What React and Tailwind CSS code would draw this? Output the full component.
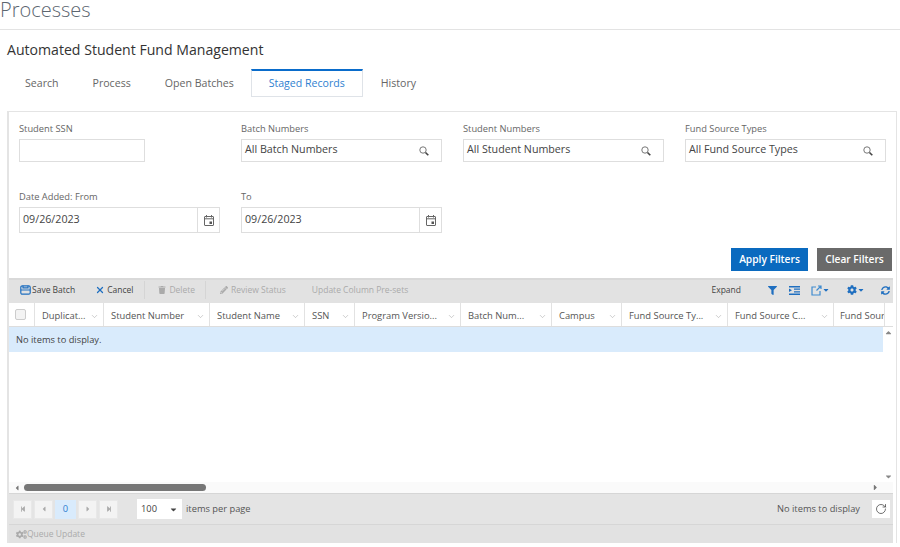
import React from "react";
import { RotateCw, ChevronDown, X } from "lucide-react";
import { FaFilter, FaCog, FaSyncAlt, FaCogs, FaTrash, FaPencilAlt, FaCaretDown, FaCaretUp, FaCaretLeft, FaCaretRight, FaStepBackward, FaStepForward } from "react-icons/fa";

const tabs = ["Search", "Process", "Open Batches", "Staged Records", "History"];

const columns = [
  ["Duplicat...", "w-[69px]"],
  ["Student Number", "w-[106px]"],
  ["Student Name", "w-[95px]"],
  ["SSN", "w-[50px]"],
  ["Program Versio...", "w-[106px]"],
  ["Batch Num...", "w-[91px]"],
  ["Campus", "w-[70px]"],
  ["Fund Source Ty...", "w-[106px]"],
  ["Fund Source C...", "w-[106px]"],
];

function FieldLabel({ children }) {
  return <div className="text-[9.3px] leading-[14px] pt-[1px] h-[14px] text-[#666] mb-[4px]">{children}</div>;
}

function LookupIcon() {
  return (
    <svg width="10" height="10" viewBox="0 0 10 10" fill="none" stroke="#777">
      <circle cx="4" cy="4" r="3.2" strokeWidth="1" />
      <path d="M6.5 6.5L9.3 9.3" stroke="#444" strokeWidth="1.6" />
    </svg>
  );
}

function CalendarIcon() {
  return (
    <svg width="10" height="11" viewBox="0 0 10 11" fill="none" stroke="#666">
      <rect x="0.5" y="1.5" width="9" height="9" rx="0.5" />
      <path d="M0.5 3.8h9M2.5 0v2.5M7.5 0v2.5" />
      <rect x="5.5" y="6.5" width="2.5" height="2.5" fill="#555" stroke="none" />
    </svg>
  );
}

function LookupField({ label, value }) {
  return (
    <div className="w-[201px]">
      <FieldLabel>{label}</FieldLabel>
      <div className="h-[23px] border border-[#dedede] flex items-center justify-between pl-[3px] pr-[12px] text-[10.7px] text-[#444]">
        <span className="pb-[2px]">{value}</span>
        <LookupIcon />
      </div>
    </div>
  );
}

function DateField({ label }) {
  return (
    <div className="w-[201px]">
      <FieldLabel>{label}</FieldLabel>
      <div className="h-[26px] border border-[#dedede] flex items-center text-[10.7px] text-[#444]">
        <span className="flex-1 pl-[3px] pb-[2px]">09/26/2023</span>
        <span className="w-[22px] h-full border-l border-[#dedede] flex items-center justify-center">
          <CalendarIcon />
        </span>
      </div>
    </div>
  );
}

function SaveIcon() {
  return (
    <svg width="11" height="10" viewBox="0 0 11 10" fill="none" stroke="#1f6fc0" strokeWidth="1.2">
      <rect x="0.8" y="0.8" width="9.4" height="8.4" rx="1.5" />
      <path d="M0.8 5h9.4M3 0.8v2h5v-2" />
    </svg>
  );
}

function RowsIcon() {
  return (
    <svg width="11" height="9" viewBox="0 0 11 9" fill="#1f6fc0">
      <path d="M0 0h11v1.5H0zM5 2.6h6v1.2H5zM5 5.2h6v1.2H5zM0 7.5h11V9H0zM0 2.6l3 1.7-3 1.8z" />
    </svg>
  );
}

function ExportIcon() {
  return (
    <svg width="11" height="11" viewBox="0 0 11 11" fill="none" stroke="#3f8bd0" strokeWidth="1.2">
      <path d="M5 2H1v8h8V6M5.5 5.5L10 1M7 1h3v3" />
    </svg>
  );
}

function PagerButton({ children }) {
  return (
    <span className="w-[19px] h-[19px] bg-[#f3f3f3] border border-[#e8e8e8] flex items-center justify-center text-[#aaa] text-[6px]">
      {children}
    </span>
  );
}

export default function App() {
  return (
    <div className="w-[900px] h-[547px] overflow-hidden bg-white font-['Open_Sans',sans-serif]">
      <div className="h-[30px] border-b border-[#e3e3e3]">
        <h1 className="text-[20px] leading-[20px] font-light text-[#5c6670]">Processes</h1>
      </div>

      <div className="pl-[7px] pr-[3px]">
        <h2 className="mt-[10px] text-[14.1px] leading-[20px] text-[#333]">Automated Student Fund Management</h2>

        <div className="mt-[9px] h-[28px] flex text-[10.6px] text-[#666]">
          {tabs.map((t) =>
            t === "Staged Records" ? (
              <div key={t} className="w-[112px] border-t-2 border-x border-b border-t-[#0a6ccb] border-x-[#dfe3e8] border-b-[#dfe3e8] flex items-center justify-center text-[#2f7fd0]">
                {t}
              </div>
            ) : (
              <div key={t} className="px-[17px] pt-[1px] first:ml-[1px] last:ml-[1px] flex items-center">
                {t}
              </div>
            )
          )}
        </div>

        <div className="mt-[14px] border-2 border-[#e4e4e4] border-b-0 border-t border-r">
          <div className="h-[166px] pt-[9px] pl-[10px] pr-[4px]">
            <div className="flex gap-[21px]">
              <div className="w-[201px]">
                <FieldLabel>Student SSN</FieldLabel>
                <div className="w-[126px] h-[23px] border border-[#dedede]" />
              </div>
              <LookupField label="Batch Numbers" value="All Batch Numbers" />
              <LookupField label="Student Numbers" value="All Student Numbers" />
              <LookupField label="Fund Source Types" value="All Fund Source Types" />
            </div>
            <div className="flex gap-[21px] mt-[27px]">
              <DateField label="Date Added: From" />
              <DateField label="To" />
            </div>
            <div className="flex justify-end gap-[9px] mt-[15px] text-[10.2px] font-semibold text-white">
              <button className="w-[77px] h-[23px] bg-[#0a6abf]">Apply Filters</button>
              <button className="w-[75px] h-[23px] bg-[#6a6a6a]">Clear Filters</button>
            </div>
          </div>

          <div className="mr-[3px]">
            <div className="h-[25px] bg-[#e2e2e2] border-t-2 border-[#d9d9d9] flex items-center pb-[3px] text-[8.5px] text-[#444]">
              <span className="ml-[11px] flex items-center gap-[1px]"><SaveIcon />Save Batch</span>
              <span className="ml-[20px] flex items-center gap-[2px]"><X size={10} strokeWidth={3} className="text-[#1f6fc0]" />Cancel</span>
              <span className="ml-[11px] w-px h-[18px] bg-[#d5d5d5]" />
              <span className="ml-[13px] flex items-center gap-[3px] text-[#aaa]"><FaTrash size={8} />Delete</span>
              <span className="ml-[10px] w-px h-[18px] bg-[#d5d5d5]" />
              <span className="ml-[14px] flex items-center gap-[3px] text-[#aaa]"><FaPencilAlt size={8} />Review Status</span>
              <span className="ml-[26px] text-[#aaa]">Update Column Pre-sets</span>
              <span className="ml-auto">Expand</span>
              <FaFilter size={9} className="ml-[27px] text-[#1f6fc0]" />
              <span className="ml-[12px]"><RowsIcon /></span>
              <span className="ml-[11px] flex items-center"><ExportIcon /><FaCaretDown size={8} className="text-[#1f6fc0]" /></span>
              <span className="ml-[17px] flex items-center"><FaCog size={10} className="text-[#1f6fc0]" /><FaCaretDown size={8} className="text-[#1f6fc0]" /></span>
              <FaSyncAlt size={9} className="ml-[16px] mr-[3px] text-[#1f6fc0]" />
            </div>

            <div className="h-[24px] flex border-b border-[#ddd] text-[9.4px] text-[#555]">
              <div className="w-[26px] flex items-center pl-[6px] border-r border-[#e2e2e2]">
                <span className="w-[11px] h-[11px] bg-[#f3f3f3] border border-[#ccc] rounded-[2px]" />
              </div>
              {columns.map(([name, w]) => (
                <div key={name} className={`${w} shrink-0 flex items-center justify-between pl-[7px] pr-[4px] pt-[3px] border-r border-[#e2e2e2]`}>
                  <span className="whitespace-nowrap">{name}</span>
                  <ChevronDown size={9} strokeWidth={1.5} className="text-[#aaa]" />
                </div>
              ))}
              <div className="w-[51px] pl-[6px] pt-[3px] flex items-center overflow-hidden whitespace-nowrap border-r border-[#e2e2e2]">Fund Source</div>
            </div>

            <div className="h-[155px] flex">
              <div className="flex-1">
                <div className="h-[25px] bg-[#d9ebfc] flex items-center pl-[7px] text-[9.3px] text-[#444]">No items to display.</div>
              </div>
              <div className="w-[10px] flex flex-col items-center justify-between py-[1px] text-[#888]">
                <FaCaretUp size={9} />
                <FaCaretDown size={9} />
              </div>
            </div>

            <div className="h-[11px] bg-[#fafafa] flex items-center pl-[4px] pr-[13px] text-[#777]">
              <FaCaretLeft size={8} />
              <span className="ml-[3px] w-[182px] h-[7px] rounded-full bg-[#777]" />
              <FaCaretRight size={9} className="ml-auto" />
            </div>

            <div className="h-[31px] bg-[#e4e4e4] border-t border-[#d6d6d6] flex items-center pl-[4px] pr-[3px] text-[9.3px] text-[#555]">
              <div className="flex gap-[2px]">
                <PagerButton><FaStepBackward /></PagerButton>
                <PagerButton><FaCaretLeft size={8} /></PagerButton>
                <span className="w-[21px] h-[19px] bg-[#d9ebfc] flex items-center justify-center text-[#2f7fd0]">0</span>
                <PagerButton><FaCaretRight size={8} /></PagerButton>
                <PagerButton><FaStepForward /></PagerButton>
              </div>
              <span className="ml-[19px] w-[45px] h-[20px] bg-white flex items-center justify-between px-[4px] text-[#444]">
                100<FaCaretDown size={9} />
              </span>
              <span className="ml-[4px]">items per page</span>
              <span className="ml-auto mr-[12px]">No items to display</span>
              <span className="w-[18px] h-[18px] bg-white flex items-center justify-center">
                <RotateCw size={12} strokeWidth={1.5} className="text-[#444]" />
              </span>
            </div>

            <div className="h-[19px] bg-[#e2e2e2] border-t border-[#d6d6d6] flex items-center pl-[7px] text-[8.5px] text-[#aaa]">
              <FaCogs size={11} />Queue Update
            </div>
          </div>
        </div>
      </div>
    </div>
  );
}
